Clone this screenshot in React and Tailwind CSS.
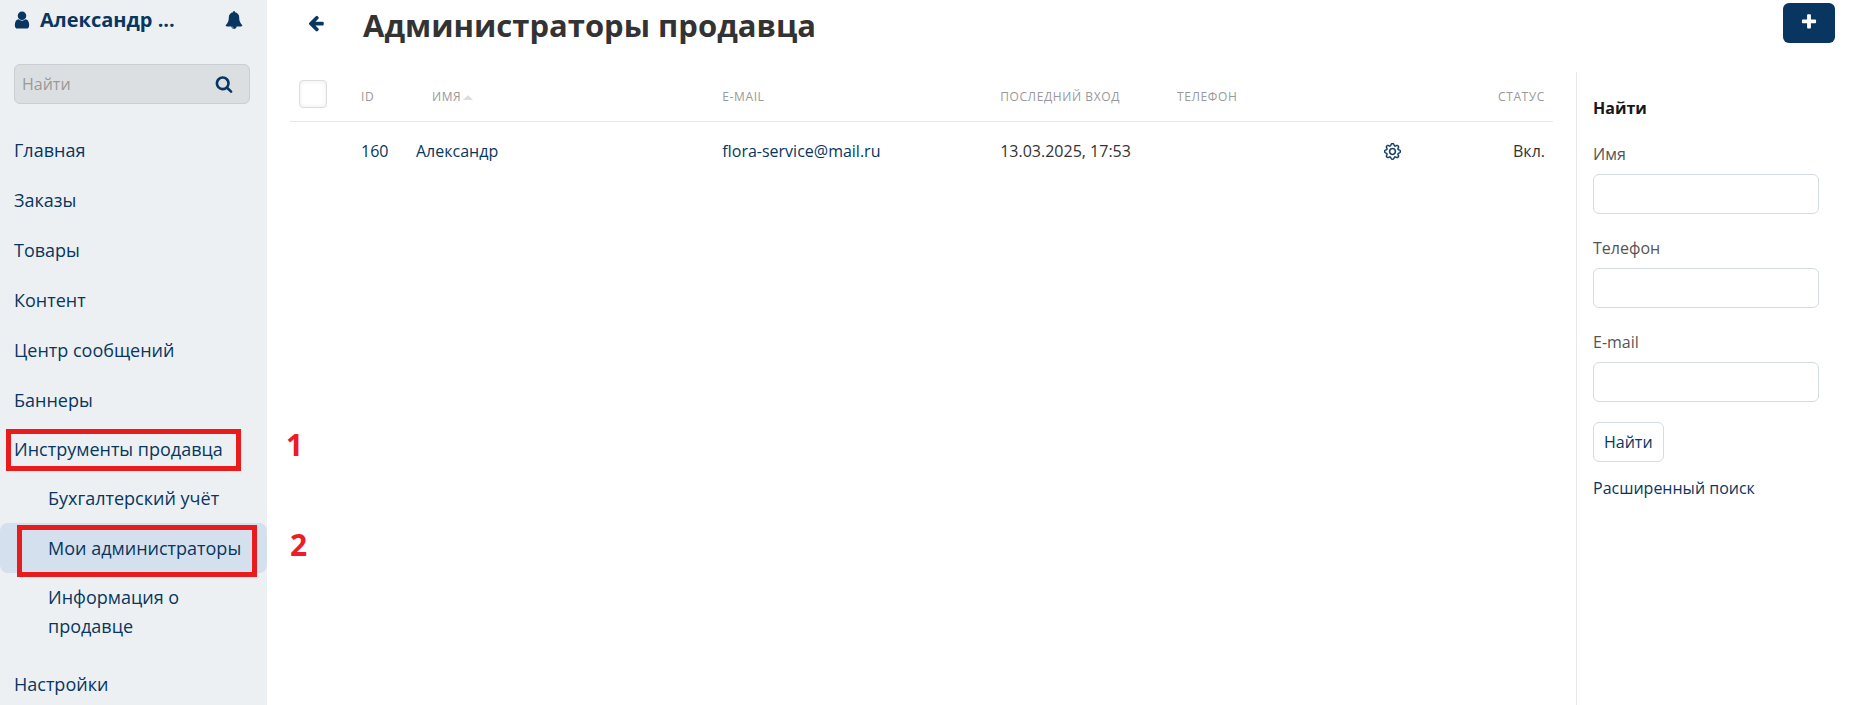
import React, { useState } from "react";
import { BsGear } from "react-icons/bs";

const icons = {
  user: "M1536 1399q0 109-62.5 187t-150.5 78H469q-88 0-150.5-78T256 1399q0-85 8.5-160.5t31.5-152 58.5-131 94-89T583 832q131 128 313 128t313-128q76 0 134.5 34.5t94 89 58.5 131 31.5 152 8.5 160.5zm-256-887q0 159-112.5 271.5T896 896 624.5 783.5 512 512t112.5-271.5T896 128t271.5 112.5T1280 512z",
  bell: "M912 1696q0-16-16-16-59 0-101.5-42.5T752 1536q0-16-16-16t-16 16q0 73 51.5 124.5T896 1712q16 0 16-16zm816-288q0 52-38 90t-90 38h-448q0 106-75 181t-181 75-181-75-75-181H192q-52 0-90-38t-38-90q50-42 91-88t85-119.5 74.5-158.5 50-206T384 576q0-152 117-282.5T808 135q-8-19-8-39 0-40 28-68t68-28 68 28 28 68q0 20-8 39 190 28 307 158.5T1408 576q0 139 19.5 260t50 206 74.5 158.5 85 119.5 91 88z",
  search:
    "M1216 832q0-185-131.5-316.5T768 384 451.5 515.5 320 832t131.5 316.5T768 1280t316.5-131.5T1216 832zm512 832q0 52-38 90t-90 38q-54 0-90-38l-343-342q-179 124-399 124-143 0-273.5-55.5t-225-150-150-225T64 832t55.5-273.5 150-225 225-150T768 128t273.5 55.5 225 150 150 225T1472 832q0 220-124 399l343 343q37 37 37 90z",
  arrowLeft:
    "M1664 896v128q0 53-32.5 90.5T1547 1152H843l293 294q38 36 38 90t-38 90l-75 76q-37 37-90 37-52 0-91-37L229 1051q-37-37-37-91 0-53 37-90l651-652q38-37 91-37 52 0 90 37l75 75q38 38 38 91t-38 91L843 768h704q52 0 84.5 37.5T1664 896z",
  plus: "M1600 736v192q0 40-28 68t-68 28h-416v416q0 40-28 68t-68 28H800q-40 0-68-28t-28-68v-416H288q-40 0-68-28t-28-68V736q0-40 28-68t68-28h416V224q0-40 28-68t68-28h192q40 0 68 28t28 68v416h416q40 0 68 28t28 68z",
};

const Icon = ({ name, className }) => (
  <svg viewBox="0 0 1792 1792" fill="currentColor" className={className} aria-hidden="true">
    <path d={icons[name]} />
  </svg>
);

const menu = ["Главная", "Заказы", "Товары", "Контент", "Центр сообщений", "Баннеры"];

const filters = [
  { id: "name", label: "Имя" },
  { id: "phone", label: "Телефон" },
  { id: "email", label: "E-mail" },
];

const Sidebar = () => {
  const [query, setQuery] = useState("");

  return (
    <aside className="w-[267px] shrink-0 bg-[#ecf0f3] text-[#083660]">
      <div className="flex items-center pl-3 pr-6 pt-1.5">
        <Icon name="user" className="size-5" />
        <a href="#profile" className="ml-2 text-xl leading-7 font-bold">
          Александр ...
        </a>
        <button className="ml-auto" aria-label="Уведомления">
          <Icon name="bell" className="size-[18px]" />
        </button>
      </div>

      {/* Search */}
      <form
        className="ml-3.5 mr-[17px] mt-[30px] h-10 flex items-center rounded-md border border-[#cbcfd3] bg-[#dcdfe2]"
        onSubmit={(e) => e.preventDefault()}
      >
        <input
          type="search"
          aria-label="Найти"
          placeholder="Найти"
          value={query}
          onChange={(e) => setQuery(e.target.value)}
          className="min-w-0 flex-1 px-[7px] text-base outline-none placeholder:text-[#999]"
        />
        <button className="px-4" aria-label="Искать">
          <Icon name="search" className="size-[18px]" />
        </button>
      </form>

      {/* Menu */}
      <nav className="mt-[21px] text-lg leading-[29px]">
        <ul>
          {menu.map((item) => (
            <li key={item}>
              <a href="#menu" className="flex h-[50px] items-center px-3.5">
                {item}
              </a>
            </li>
          ))}
          <li>
            <div className="relative">
              <a href="#tools" className="flex h-12 items-center px-3.5">
                Инструменты продавца
              </a>
              <span className="absolute left-1.5 right-[26px] top-1 h-[42px] border-5 border-[#e81c1c]" />
              <span className="absolute left-[286px] top-0.5 text-3xl font-bold leading-9 text-[#ee1c25]">
                1
              </span>
            </div>
            <ul>
              <li>
                <a href="#accounting" className="flex h-[50px] items-center pl-12">
                  Бухгалтерский учёт
                </a>
              </li>
              <li className="relative">
                <a href="#admins" className="flex h-[50px] items-center rounded-lg bg-[#d5e0ee] pl-12">
                  Мои администраторы
                </a>
                <span className="absolute left-[17px] right-2.5 top-0.5 h-[52px] border-5 border-[#e81c1c]" />
                <span className="absolute left-[290px] top-1 text-3xl font-bold leading-9 text-[#ee1c25]">
                  2
                </span>
              </li>
              <li>
                <a href="#info" className="block py-2.5 pl-12 pr-16">
                  Информация о продавце
                </a>
              </li>
            </ul>
          </li>
          <li>
            <a href="#settings" className="mt-2 flex h-[50px] items-center px-3.5">
              Настройки
            </a>
          </li>
        </ul>
      </nav>
    </aside>
  );
};

const AdminsTable = () => (
  <table className="w-full table-fixed text-left text-base">
    <thead className="border-b border-[#e8e8e8] text-xs uppercase tracking-wider text-[#999]">
      <tr className="h-[49px]">
        <th className="w-[63px] px-2 pb-1 font-normal">
          <input
            type="checkbox"
            aria-label="Выбрать все"
            className="ml-px block size-7 appearance-none rounded border border-[#ddd] bg-white shadow-[inset_0_0_5px_#ececec]"
          />
        </th>
        <th className="w-[55px] px-2 pt-0.5 font-normal">ID</th>
        <th className="px-2 pt-0.5 font-normal">
          <a href="#sort" className="ml-4 inline-flex items-center gap-0.5">
            Имя
            <svg viewBox="0 0 10 5" className="w-2.5 h-[5px] fill-[#ddd]" aria-hidden="true">
              <path d="M0 5 4.3.7a1 1 0 0 1 1.4 0L10 5z" />
            </svg>
          </a>
        </th>
        <th className="w-[22%] px-2 pt-0.5 font-normal">E-mail</th>
        <th className="w-[14%] px-2 pt-0.5 font-normal">Последний вход</th>
        <th className="w-[200px] px-2 pt-0.5 font-normal">Телефон</th>
        <th className="w-[46px]" aria-label="Действия" />
        <th className="w-[138px] px-2 pt-0.5 text-right font-normal">Статус</th>
      </tr>
    </thead>
    <tbody>
      <tr className="h-[60px] text-[#083660]">
        <td />
        <td className="px-2">
          <a href="#160">160</a>
        </td>
        <td className="px-2">
          <a href="#160">Александр</a>
        </td>
        <td className="px-2">
          <a href="#mail">flora-service@mail.ru</a>
        </td>
        <td className="px-2 text-[#333]">13.03.2025, 17:53</td>
        <td />
        <td>
          <button className="mx-auto block" aria-label="Настроить">
            <BsGear className="size-[17px] [stroke-width:0.4]" />
          </button>
        </td>
        <td className="px-2 text-right text-[#333]">Вкл.</td>
      </tr>
    </tbody>
  </table>
);

const SearchPanel = () => (
  <aside className="w-[280px] shrink-0 border-l border-[#e8e8e8] pl-4 pr-[37px] text-base leading-6">
    <h2 className="mt-6 font-bold text-[#181818]">Найти</h2>
    <form className="mt-[22px]" onSubmit={(e) => e.preventDefault()}>
      {filters.map(({ id, label }) => (
        <div key={id} className="mb-[22px]">
          <label htmlFor={id} className="block text-[#555]">
            {label}
          </label>
          <input
            id={id}
            type="text"
            className="mt-2 block h-10 w-full rounded-md border border-[#d3dbe3] px-2 outline-none"
          />
        </div>
      ))}
      <button className="-mt-0.5 block h-10 rounded-md border border-[#d3dbe3] px-2.5 text-[#083660]">
        Найти
      </button>
    </form>
    <a href="#advanced" className="mt-3.5 block text-[#083660]">
      Расширенный поиск
    </a>
  </aside>
);

const App = () => {
  return (
    <div className="flex min-h-screen bg-white font-['Open_Sans','Noto_Sans',sans-serif]">
      <Sidebar />
      <div className="flex min-w-0 flex-1 flex-col">
        <header className="flex h-[72px] items-start pl-10 pr-[21px]">
          <a href="#back" aria-label="Назад" className="mt-3.5 text-[#083660]">
            <Icon name="arrowLeft" className="size-[18px]" />
          </a>
          <h1 className="ml-[38px] mt-[5px] text-[31px] leading-10 font-bold text-[#333]">
            Администраторы продавца
          </h1>
          <button
            aria-label="Добавить"
            className="ml-auto mt-[3px] flex h-10 w-[52px] items-center justify-center rounded-md bg-[#083660] pb-0.5 text-white"
          >
            <Icon name="plus" className="size-[18px]" />
          </button>
        </header>
        <div className="flex flex-1">
          <main className="min-w-0 flex-1 pl-[23px] pr-[23px]">
            <AdminsTable />
          </main>
          <SearchPanel />
        </div>
      </div>
    </div>
  );
};

export default App;
